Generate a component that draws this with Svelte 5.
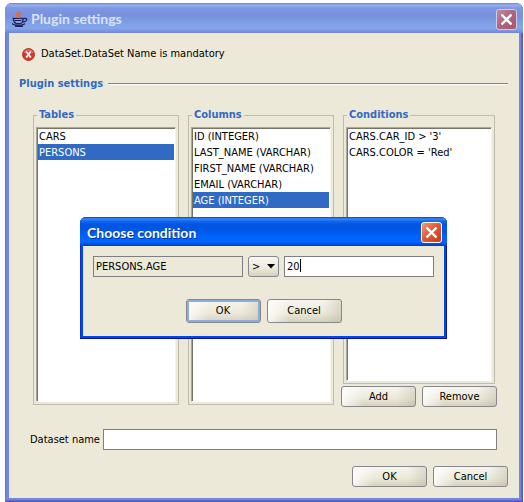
<script>
  const tables = ['CARS', 'PERSONS'];
  const columns = [
    'ID (INTEGER)',
    'LAST_NAME (VARCHAR)',
    'FIRST_NAME (VARCHAR)',
    'EMAIL (VARCHAR)',
    'AGE (INTEGER)'
  ];
  const conditions = ["CARS.CAR_ID > '3'", "CARS.COLOR = 'Red'"];
  const operators = ['>', '<', '=', '>=', '<=', '<>'];

  let table = $state('PERSONS');
  let column = $state('AGE (INTEGER)');
  let condition = $state(null);
  let operator = $state('>');
  let value = $state('20');
  let datasetName = $state('');
</script>

{#snippet cross()}
  <svg width="11" height="11" viewBox="0 0 11 11" aria-hidden="true">
    <path d="M.5 .5L10.500 10.500M10.500 .5L.5 10.500" stroke="#fff" stroke-width="2.300" fill="none" />
  </svg>
{/snippet}

<main class="window">
  <header class="titlebar">
    <svg class="java" width="16" height="16" viewBox="0 0 16 16" aria-hidden="true">
      <path d="M1 7.500h10v2c0 1.500-1 2.500-2.500 2.500H4C2 12 1 10 1 8.500z" fill="#b9c3ea" />
      <path d="M.5 7.500h11M1.500 8c0 2 .8 3.600 2.500 4.500h4.500c1.700-.5 2.500-2.500 2.500-4.500M11 7.600c5-1.400 5 2.400-.5 3.600" stroke="#1d2463" stroke-width="1.300" fill="none" />
      <path d="M2.500 9.700h7M0 12.500c2 2.300 11 2.300 13 0M3 15.400h8" stroke="#1d2463" stroke-width="1.300" fill="none" />
      <path d="M7.300 0c1.300 2-3.300 2.400-2.800 4.100.2.800 1 1.300 1.300 2.400M9.300 2.200c-2.700 1.200-2.500 1.800-1.800 2.600.4.600 0 1.200-.5 1.700" stroke="#e8683c" stroke-width="1.800" fill="none" />
    </svg>
    <h1>Plugin settings</h1>
    <button class="close" aria-label="Close window">{@render cross()}</button>
  </header>

  <div class="body">
    <p class="error">
      <svg width="13" height="13" viewBox="0 0 13 13" aria-hidden="true">
        <circle cx="6.500" cy="6.500" r="6" fill="#d9342b" stroke="#b8382c" stroke-width="1" />
        <path d="M2 5a4.800 4.800 0 0 1 9 0" stroke="#ee8a7c" stroke-width="1" fill="none" />
        <path d="M4.200 3.500L8.800 9.500M8.800 3.500L4.200 9.500" stroke="#fff" stroke-width="1.900" />
      </svg>
      DataSet.DataSet Name is mandatory
    </p>

    <h2><span>Plugin settings</span></h2>

    <div class="panels">
      <div class="panel tables">
        <fieldset>
          <legend>Tables</legend>
          <select size="5" aria-label="Tables" bind:value={table}>
            {#each tables as item}<option value={item}>{item}</option>{/each}
          </select>
        </fieldset>
      </div>
      <div class="panel">
        <fieldset>
          <legend>Columns</legend>
          <select size="5" aria-label="Columns" bind:value={column}>
            {#each columns as item}<option value={item}>{item}</option>{/each}
          </select>
        </fieldset>
      </div>
      <div class="panel conditions">
        <fieldset>
          <legend>Conditions</legend>
          <select size="5" aria-label="Conditions" bind:value={condition}>
            {#each conditions as item}<option value={item}>{item}</option>{/each}
          </select>
        </fieldset>
        <div class="actions spread">
          <button class="btn">Add</button>
          <button class="btn">Remove</button>
        </div>
      </div>
    </div>

    <div class="dataset">
      <label for="dataset">Dataset name</label>
      <input id="dataset" type="text" bind:value={datasetName} />
    </div>

    <div class="actions end">
      <button class="btn">OK</button>
      <button class="btn">Cancel</button>
    </div>
  </div>
</main>

<div class="dialog" role="dialog" aria-labelledby="dialog-title">
  <header class="titlebar active">
    <h1 id="dialog-title">Choose condition</h1>
    <button class="close" aria-label="Close dialog">{@render cross()}</button>
  </header>
  <div class="dialog-body">
    <div class="condition">
      <input class="field" type="text" aria-label="Column" value="PERSONS.AGE" readonly />
      <div class="combo">
        <select aria-label="Operator" bind:value={operator}>
          {#each operators as item}<option value={item}>{item}</option>{/each}
        </select>
        <svg width="8" height="5" viewBox="0 0 8 5" aria-hidden="true"><path d="M0 0h8L4 4.500z" fill="#000" /></svg>
      </div>
      <div class="field value">
        <input type="text" aria-label="Value" bind:value />
        <span class="caret"></span>
      </div>
    </div>
    <div class="actions center">
      <button class="btn tall default">OK</button>
      <button class="btn tall">Cancel</button>
    </div>
  </div>
</div>

<style>
  :global(body) {
    margin: 0;
    background: #fff;
  }
  :global(#app) {
    position: relative;
    display: flex;
    min-height: 100vh;
  }
  main, .dialog, input, select, button {
    font: 11px/14px "DejaVu Sans Condensed", Tahoma, sans-serif;
    color: #000;
  }
  h1, h2, p, fieldset, legend {
    margin: 0;
    padding: 0;
  }
  input, select, button, fieldset, .window, .dialog {
    box-sizing: border-box;
  }
  .window {
    flex: 1;
    display: flex;
    flex-direction: column;
    margin: 3px 1px 0 5px;
    padding: 0 4px 4px;
    border-radius: 7px 7px 0 0;
    background: #7288dc;
    box-shadow: inset 1px 0 #6574cf, inset -1px -1px #5a55bc, inset -2px -2px #6468cc;
  }
  .titlebar {
    display: flex;
    align-items: center;
    height: 30px;
    box-sizing: border-box;
    margin: 0 -4px;
    padding: 2px 6px 0 7px;
    border-radius: 7px 7px 0 0;
    background: linear-gradient(#6a82d8 0, #98b0ee 2px, #7f98e2 5px, #7890de 12px, #7f9fe6 20px, #84a7ea 25px, #7b93e0 28px, #7185d8 30px);
  }
  .titlebar h1 {
    flex: 1;
    margin-left: 3px;
    font: bold 14px/18px Lato, "Trebuchet MS", sans-serif;
    color: #d8e4f8;
  }
  .close {
    display: flex;
    align-items: center;
    justify-content: center;
    width: 21px;
    height: 21px;
    padding: 0;
    border: 1px solid #c8cdec;
    border-radius: 3px;
    background: linear-gradient(135deg, #c08a9c, #b0647c 50%, #a8566c);
  }
  .body {
    flex: 1;
    display: flex;
    flex-direction: column;
    padding: 13px 11px 11px 10px;
    background: #ece9d8;
  }
  .error {
    display: flex;
    align-items: center;
    gap: 6px;
    height: 16px;
    margin-left: 3px;
  }
  h2 {
    display: flex;
    align-items: center;
    gap: 5px;
    margin-top: 15px;
    font: bold 11px/14px "DejaVu Sans Condensed", Tahoma, sans-serif;
    color: #316ac5;
  }
  h2::after {
    content: "";
    flex: 1;
    height: 1px;
    background: #808080;
    border-bottom: 1px solid #fff;
  }
  .panels {
    flex: 1;
    display: flex;
    gap: 7px;
    margin: 17px 11px 0 14px;
  }
  .panel {
    flex: 146 1 0;
    min-width: 0;
    display: flex;
    flex-direction: column;
  }
  .tables {
    margin-right: 2px;
  }
  .conditions {
    flex-grow: 156;
  }
  .conditions fieldset {
    margin: 0 2px;
  }
  fieldset {
    flex: 1;
    min-width: 0;
    display: flex;
    flex-direction: column;
    padding: 5px 2px 2px;
    border: 1px solid #bfbcab;
  }
  legend {
    margin-left: 1px;
    padding: 0 2px;
    font: bold 11px/14px "DejaVu Sans Condensed", Tahoma, sans-serif;
    color: #316ac5;
  }
  fieldset select {
    flex: 1;
    width: 100%;
    min-height: 0;
    padding: 0;
    border: 1px solid #aca899;
    border-right-color: #f6f4ea;
    border-bottom-color: #fff;
    border-radius: 0;
    background: #fff;
    box-shadow: inset 1px 1px #76746a;
    outline: 0;
    overflow: hidden;
  }
  option {
    color: #000;
  }
  fieldset option {
    height: 16px;
    min-height: 16px;
    margin: 0 1px;
    padding: 2px 0 0 1px;
    box-sizing: border-box;
    line-height: 14px;
  }
  fieldset option:checked {
    background: #316ac5 linear-gradient(#316ac5, #316ac5);
    color: #fff;
  }
  .actions {
    display: flex;
    gap: 6px;
  }
  .spread {
    justify-content: space-between;
    margin-top: 2px;
    margin-bottom: -2px;
  }
  .end {
    justify-content: flex-end;
    margin-top: 16px;
  }
  .center {
    justify-content: center;
    margin-top: 22px;
  }
  .btn {
    width: 75px;
    height: 21px;
    padding: 0;
    border: 1px solid #85878c;
    border-radius: 3px;
    background: linear-gradient(90deg, #fffc, #fff0 30%, #fff0 75%, #b8b4a066), linear-gradient(#f6f5f0, #ece9d8 60%, #d3d0be);
  }
  .tall {
    height: 24px;
  }
  .default {
    box-shadow: inset 0 0 0 2px #8eabdc;
  }
  .dataset {
    display: flex;
    align-items: center;
    gap: 3px;
    margin: 24px 11px 0 11px;
  }
  .dataset input, .field {
    flex: 1;
    min-width: 0;
    height: 21px;
    padding: 0 2px;
    border: 1px solid #7f7f7f;
    border-radius: 0;
    background: #fff;
    outline: 0;
  }
  .dialog {
    position: absolute;
    left: 80px;
    top: 217px;
    width: 367px;
    padding: 0 3px 3px;
    border-radius: 6px 6px 0 0;
    background: #0048e8;
    box-shadow: inset -1px -1px #00138c, inset 1px 0 #0831d9;
  }
  .dialog .titlebar {
    height: 29px;
    margin: 0 -3px;
    padding: 2px 5px 0;
    border-radius: 6px 6px 0 0;
    background: linear-gradient(#0540c8 0, #3a8cfc 2px, #1068f0 4px, #0054e0 8px, #0058e8 14px, #0064fc 20px, #0066ff 25px, #0050e4 27px, #003cc4 29px);
  }
  .dialog .titlebar h1 {
    margin-left: 2px;
    color: #fff;
    text-shadow: 1px 1px #0a2f9c;
  }
  .dialog .close {
    border-color: #fff;
    background: linear-gradient(135deg, #f09c80, #e25a34 45%, #c83c14);
  }
  .dialog-body {
    padding: 10px 10px 13px;
    background: #ece9d8;
  }
  .condition {
    display: flex;
    gap: 5px;
  }
  .condition .field[readonly] {
    background: #ece9d8;
  }
  .value {
    position: relative;
    box-sizing: border-box;
    display: flex;
  }
  .value input {
    width: 100%;
    padding: 0;
    border: 0;
    background: none;
    outline: 0;
  }
  .caret {
    position: absolute;
    left: 15px;
    top: 2px;
    width: 1px;
    height: 13px;
    background: #000;
  }
  .combo {
    position: relative;
    width: 31px;
  }
  .combo select {
    appearance: none;
    width: 100%;
    height: 21px;
    padding: 0 3px;
    border: 1px solid #85878c;
    border-radius: 3px;
    background: linear-gradient(#f8f7f2, #ece9d8 60%, #d4d1c0);
  }
  .combo svg {
    position: absolute;
    right: 4px;
    top: 8px;
    pointer-events: none;
  }
</style>
